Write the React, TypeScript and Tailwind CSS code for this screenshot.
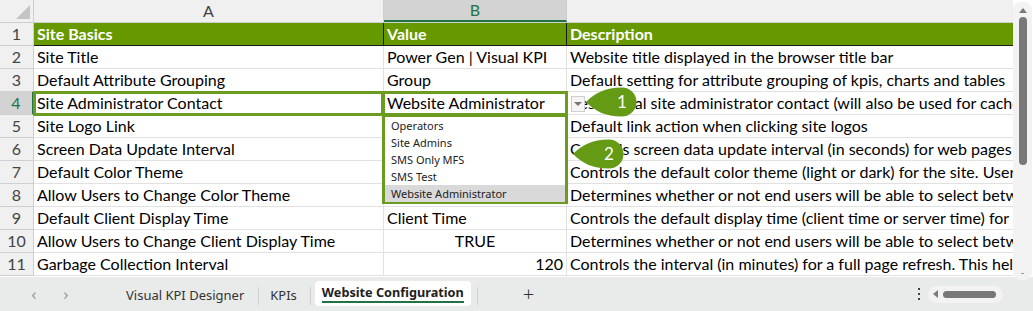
import React from "react";

const rows: { a: string; b: string; bAlign?: "left" | "center" | "right"; c: string }[] = [
  { a: "Site Title", b: "Power Gen | Visual KPI", c: "Website title displayed in the browser title bar" },
  { a: "Default Attribute Grouping", b: "Group", c: "Default setting for attribute grouping of kpis, charts and tables" },
  { a: "Site Administrator Contact", b: "Website Administrator", c: "Residential site administrator contact (will also be used for cache" },
  { a: "Site Logo Link", b: "", c: "Default link action when clicking site logos" },
  { a: "Screen Data Update Interval", b: "", c: "Controls screen data update interval (in seconds) for web pages" },
  { a: "Default Color Theme", b: "", c: "Controls the default color theme (light or dark) for the site. Users" },
  { a: "Allow Users to Change Color Theme", b: "", c: "Determines whether or not end users will be able to select between" },
  { a: "Default Client Display Time", b: "Client Time", c: "Controls the default display time (client time or server time) for" },
  { a: "Allow Users to Change Client Display Time", b: "TRUE", bAlign: "center", c: "Determines whether or not end users will be able to select between" },
  { a: "Garbage Collection Interval", b: "120", bAlign: "right", c: "Controls the interval (in minutes) for a full page refresh. This helps" },
];

const font = { fontFamily: "Lato, 'Liberation Sans', sans-serif" };

function Callout({ n }: { n: string }) {
  return (
    <svg width="52" height="30" viewBox="0 0 52 30">
      <path d="M1,15 C10,6 20,0.5 37,0.5 A14.5,14.5 0 1 1 37,29.5 C20,29.5 10,24 1,15 Z" fill="#649a14" />
      <text x="37" y="21" textAnchor="middle" fill="#fff" fontSize="17" fontFamily="Lato, sans-serif">{n}</text>
    </svg>
  );
}

export default function App() {
  return (
    <div className="w-[1033px] h-[311px] bg-white overflow-hidden relative text-[16px] text-black" style={font}>
      <div className="flex h-[277px]">
        <div className="w-[1013px] flex flex-col">
          {/* column headers */}
          <div className="flex h-[23px] bg-[#f0f0f0] border-b border-[#cfcfcf] text-[#444]">
            <div className="w-[34px] border-r border-[#cfcfcf] flex items-end justify-end p-[3px]">
              <div className="w-0 h-0 border-l-[14px] border-l-transparent border-b-[14px] border-b-[#c4c4c4]" />
            </div>
            <div className="w-[350px] border-r border-[#cfcfcf] flex items-center justify-center">A</div>
            <div className="w-[183px] border-r border-[#cfcfcf] bg-[#d3d3d3] text-[#217346] border-b-2 border-b-[#217346] flex items-center justify-center">B</div>
            <div className="flex-1" />
          </div>
          {/* row 1 header */}
          <div className="flex h-[23px]">
            <div className="w-[34px] bg-[#f0f0f0] border-r border-b border-[#cfcfcf] flex items-center justify-center text-[#444]">1</div>
            <div className="w-[350px] bg-[#669900] border-r border-b border-[#1a1a1a] text-white font-bold pl-[3px] flex items-center">Site Basics</div>
            <div className="w-[183px] bg-[#669900] border-r border-b border-[#1a1a1a] text-white font-bold pl-[3px] flex items-center">Value</div>
            <div className="flex-1 bg-[#669900] border-b border-[#1a1a1a] text-white font-bold pl-[3px] flex items-center">Description</div>
          </div>
          {rows.map((r, i) => {
            const sel = i === 2;
            return (
              <div key={i} className="flex h-[23px]">
                <div className={`w-[34px] border-r border-b flex items-center justify-center ${sel ? "bg-[#d3d3d3] text-[#217346] border-r-2 border-r-[#217346] border-b-[#cfcfcf]" : "bg-[#f0f0f0] text-[#444] border-[#cfcfcf]"}`}>{i + 2}</div>
                <div className="w-[350px] border-r border-b border-[#e1e1e1] pl-[3px] flex items-center whitespace-nowrap overflow-hidden">{r.a}</div>
                <div className={`w-[183px] border-r border-b border-[#e1e1e1] px-[3px] flex items-center whitespace-nowrap overflow-hidden ${r.bAlign === "center" ? "justify-center" : r.bAlign === "right" ? "justify-end" : ""}`}>{r.b}</div>
                <div className="flex-1 border-b border-[#e1e1e1] pl-[3px] flex items-center whitespace-nowrap overflow-hidden">{r.c}</div>
              </div>
            );
          })}
        </div>
        {/* vertical scrollbar */}
        <div className="w-[20px] pt-[2px] pr-[1px]">
          <div className="h-[278px] bg-[#f3f3f3] rounded-[8px] flex flex-col items-center pt-[6px]">
            <div className="w-0 h-0 border-l-[4px] border-l-transparent border-r-[4px] border-r-transparent border-b-[5px] border-b-[#7a7a7a]" />
            <div className="w-[8px] h-[148px] bg-[#787878] rounded-full mt-[4px]" />
            <div className="flex-1" />
            <div className="w-[3px] h-[1px] bg-[#999] mb-[6px]" />
          </div>
        </div>
      </div>

      {/* bottom bar */}
      <div className="h-[34px] bg-[#e8ebea] flex items-center text-[13px] text-[#333]" style={{ fontFamily: "'Noto Sans', sans-serif" }}>
        <div className="w-[64px] flex justify-center text-[#999] text-[17px] pl-[4px]">‹</div>
        <div className="w-[10px] flex justify-center text-[#999] text-[17px] -ml-[3px]">›</div>
        <div className="ml-[55px] mt-[4px]">Visual KPI Designer</div>
        <div className="w-[1px] h-[18px] bg-[#cfcfcf] ml-[14px] mt-[4px]" />
        <div className="ml-[11px] mt-[4px]">KPIs</div>
        <div className="w-[1px] h-[18px] bg-[#cfcfcf] ml-[13px] mt-[4px]" />
        <div className="ml-[4px] h-[25px] -mt-[2px] bg-white rounded-[4px] px-[7px] flex flex-col justify-center">
          <div className="font-bold text-[#222] leading-[18px] text-[12.7px]">Website Configuration</div>
          <div className="h-[2px] bg-[#217346]" />
        </div>
        <div className="w-[1px] h-[18px] bg-[#cfcfcf] ml-[6px] mt-[4px]" />
        <div className="ml-[45px] text-[20px] font-light text-[#333] leading-none">+</div>
        <div className="flex-1" />
        <div className="flex flex-col gap-[3px] mr-[8px]">
          <div className="w-[2px] h-[2px] bg-[#444]" />
          <div className="w-[2px] h-[2px] bg-[#444]" />
          <div className="w-[2px] h-[2px] bg-[#444]" />
        </div>
        <div className="w-[75px] h-[17px] bg-[#f3f3f3] rounded-full flex items-center pl-[5px] mr-[30px]">
          <div className="w-0 h-0 border-t-[4px] border-t-transparent border-b-[4px] border-b-transparent border-r-[5px] border-r-[#7a7a7a]" />
          <div className="ml-[5px] w-[53px] h-[7px] bg-[#787878] rounded-full" />
        </div>
      </div>

      {/* selection rectangles */}
      <div className="absolute left-[33px] top-[91px] w-[351px] h-[25px] border-[3px] border-[#6b9c1f] pointer-events-none" />
      <div className="absolute left-[382px] top-[91px] w-[186px] h-[25px] border-[3px] border-[#6b9c1f] pointer-events-none" />
      {/* dropdown arrow */}
      <div className="absolute left-[571px] top-[96px] w-[14px] h-[16px] bg-[#f5f5f5] border border-[#cfcfcf] flex items-center justify-center">
        <div className="w-0 h-0 border-l-[4px] border-l-transparent border-r-[4px] border-r-transparent border-t-[4px] border-t-[#777]" />
      </div>
      {/* dropdown list */}
      <div className="absolute left-[382px] top-[114px] w-[186px] h-[90px] bg-white border-[3px] border-[#6b9c1f] text-[11px] text-[#222]" style={{ fontFamily: "'Noto Sans', sans-serif" }}>
        {["Operators", "Site Admins", "SMS Only MFS", "SMS Test", "Website Administrator"].map((t, i) => (
          <div key={t} className={`h-[17px] leading-[17px] pl-[6px] ${i === 4 ? "bg-[#d9d9d9]" : ""}`}>{t}</div>
        ))}
      </div>
      {/* callouts */}
      <div className="absolute left-[585px] top-[87px]"><Callout n="1" /></div>
      <div className="absolute left-[572px] top-[139px]"><Callout n="2" /></div>
    </div>
  );
}
